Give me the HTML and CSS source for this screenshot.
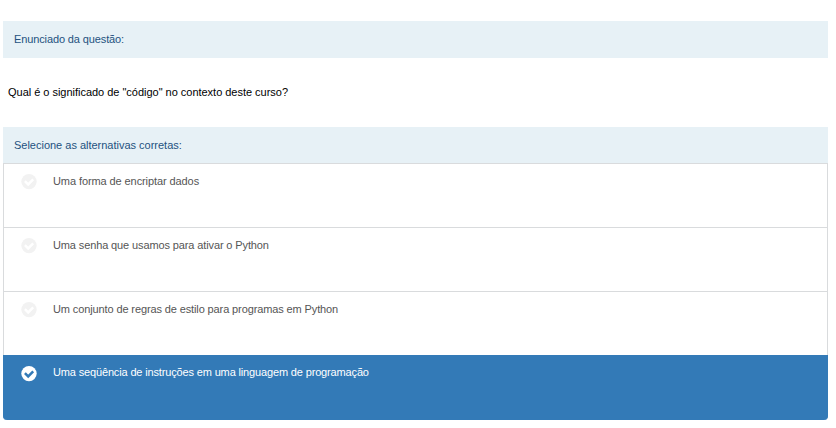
FILE: index.html
```html
<!DOCTYPE html>
<html lang="pt-BR">
<head>
<meta charset="utf-8">
<title>Questão</title>
<link rel="stylesheet" href="styles.css">
</head>
<body>
<main class="quiz">
  <h2 class="heading"><span class="t-heading-a">Enunciado da questão:</span></h2>
  <p class="question"><span class="t-question">Qual é o significado de "código" no contexto deste curso?</span></p>
  <h2 class="heading heading-options"><span class="t-heading-b">Selecione as alternativas corretas:</span></h2>
  <ul class="options">
    <li class="option">
      <svg class="check" viewBox="0 0 16 16"><circle cx="8" cy="7.6" r="7.7"/><path d="M3.9 7.1 7.2 10.4 12.2 5.4"/></svg>
      <span class="t-one">Uma forma de encriptar dados</span>
    </li>
    <li class="option">
      <svg class="check" viewBox="0 0 16 16"><circle cx="8" cy="7.6" r="7.7"/><path d="M3.9 7.1 7.2 10.4 12.2 5.4"/></svg>
      <span class="t-two">Uma senha que usamos para ativar o Python</span>
    </li>
    <li class="option">
      <svg class="check" viewBox="0 0 16 16"><circle cx="8" cy="7.6" r="7.7"/><path d="M3.9 7.1 7.2 10.4 12.2 5.4"/></svg>
      <span class="t-three">Um conjunto de regras de estilo para programas em Python</span>
    </li>
    <li class="option selected">
      <svg class="check" viewBox="0 0 16 16"><circle cx="8" cy="7.6" r="7.7"/><path d="M3.9 7.1 7.2 10.4 12.2 5.4"/></svg>
      <span class="t-four">Uma seqüência de instruções em uma linguagem de programação</span>
    </li>
  </ul>
</main>
</body>
</html>
```
FILE: styles.css
```css
* { box-sizing: border-box; }
body {
  margin: 0;
  background: #fff;
  font: 11px/16px "Liberation Sans", Arial, sans-serif;
}
.quiz { padding: 21px 8px 0 3px; }
.heading {
  height: 37px;
  margin: 0;
  padding: 10px 11px;
  background: #e7f1f6;
  color: #24517f;
  font-size: 11px;
  font-weight: 400;
}
.heading-options { height: 36px; }
.question {
  height: 69px;
  margin: 0;
  padding: 26px 5px;
  color: #000;
}
.t-heading-a { letter-spacing: -0.12px; }
.t-question { letter-spacing: -0.02px; }
.t-heading-b { letter-spacing: -0.01px; }
.t-one { letter-spacing: -0.09px; }
.t-two { letter-spacing: -0.12px; }
.t-three { letter-spacing: -0.117px; }
.t-four { letter-spacing: -0.15px; }
.options {
  margin: 0;
  padding: 0;
  list-style: none;
}
.option {
  display: flex;
  align-items: flex-start;
  gap: 16px;
  height: 64px;
  padding: 9px 17px;
  border: 1px solid #d9dbdd;
  border-bottom: 0;
  color: #555;
}
.check {
  width: 16px;
  height: 16px;
  margin-top: 1px;
  flex: none;
  overflow: visible;
}
.check circle { fill: #f2f2f2; }
.check path { fill: none; stroke: #fff; stroke-width: 2.5; }
.selected {
  height: 65px;
  background: #337ab7;
  border-color: #337ab7;
  border-radius: 0 0 4px 4px;
  color: #fff;
}
.selected .check circle { fill: #fff; }
.selected .check path { stroke: #337ab7; }
.selected span { margin-top: -1px; }
```
